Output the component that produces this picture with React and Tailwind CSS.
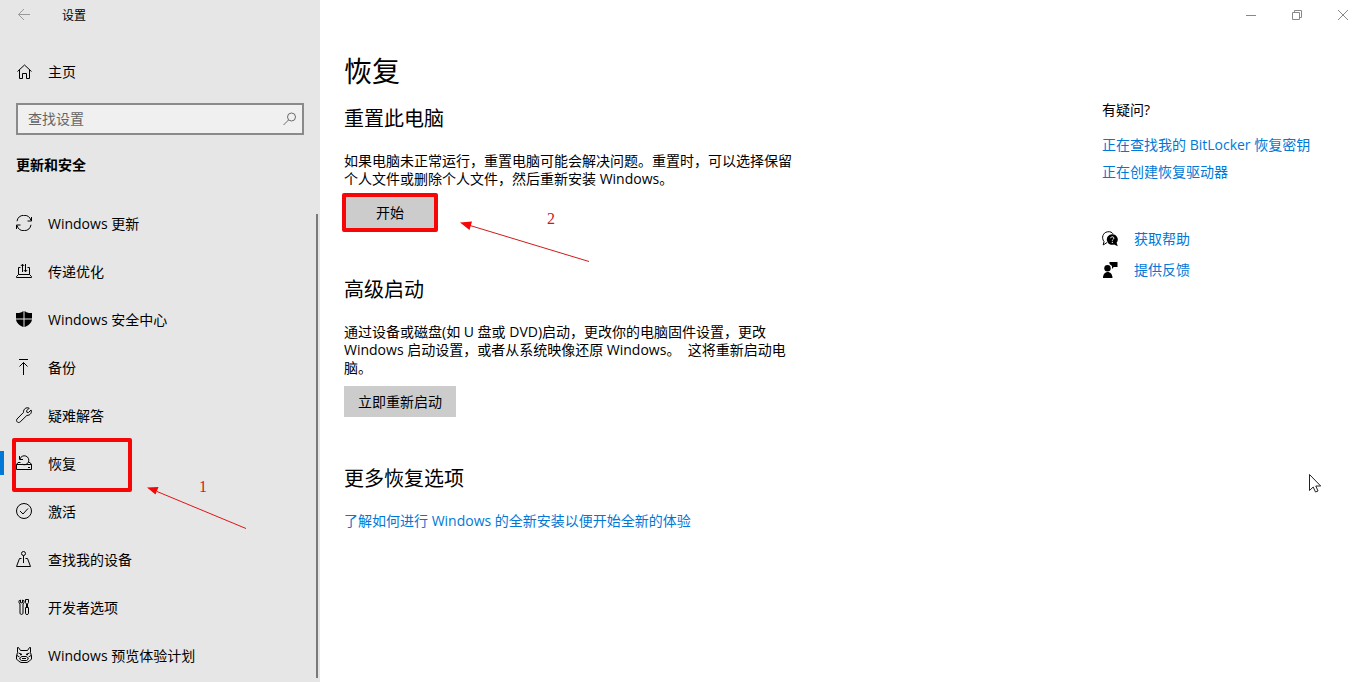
import React from "react";

const Icon = ({ children, size = "size-4", viewBox = "0 0 16 16", className = "" }) => (
  <svg
    className={`${size} shrink-0 ${className}`}
    viewBox={viewBox}
    fill="none"
    stroke="currentColor"
    strokeWidth="1"
    aria-hidden="true"
  >
    {children}
  </svg>
);

const SyncIcon = () => (
  <Icon className="mb-0.5">
    <path d="M1 6.2A7.2 7.2 0 0 1 15 5.5M15 9.8A7.2 7.2 0 0 1 1 10.5" />
    <path d="M15.5 2v4h-4M.5 14v-4h4" />
  </Icon>
);

const DeliveryIcon = () => (
  <Icon className="mb-0.5">
    <path d="M4.5 4.5h-2v7M11.5 4.5h2v7M2.5 11.5h11l2 2v1H.5v-1z" />
    <path d="M6.5 9V1.2M4.8 3l1.7-1.8L8.2 3M9.5 1v7.8M7.8 7l1.7 1.8L11.2 7" />
  </Icon>
);

const ShieldIcon = () => (
  <Icon className="mb-0.5">
    <path
      d="M7.500 0 5.500 1.300 3 2H0v5.500h7.500zM8.500 0l2 1.300L13 2h3v5.500H8.500zM0 8.500h7.500V16C3.500 14.500.5 12 0 8.500zM8.500 8.500H16C15.500 12 12.500 14.500 8.500 16z"
      fill="currentColor"
      stroke="none"
    />
  </Icon>
);

const BackupIcon = () => (
  <Icon className="mb-0.5">
    <path d="M3 .5h9M7.500 3.500V16M3.500 7.500l4-4 4 4" />
  </Icon>
);

const WrenchIcon = () => (
  <Icon className="mb-0.5">
    <path d="M13.200 1.200 10.600 3.800l.3 1.500 1.500.3 2.700-2.600c1 2.500-.7 5.500-4.200 5.400L4.200 14.900c-2 1.800-4.800-.7-3.200-2.900l6.500-6.600C7.200 2 10.300-.1 13.200 1.200z" />
  </Icon>
);

const RecoveryIcon = () => (
  <Icon className="mb-0.5">
    <path d="M.5 9.500h15v5H.5zM.5 9.500l1.500-2h2.500M15.500 9.500l-1.500-2h-1.500M12 12.500h2" />
    <path d="M4 4a4.500 4.500 0 1 1 2.300 5.300M3.500 1v3.500H7" />
  </Icon>
);

const CheckIcon = () => (
  <Icon className="mb-0.5">
    <circle cx="8" cy="8" r="7.500" />
    <path d="M4 8l3 3 5-5.500" />
  </Icon>
);

const LocateIcon = () => (
  <Icon className="mb-0.5">
    <circle cx="7.500" cy="2.500" r="2" />
    <path d="M7.500 4.500V12M5.500 7.500h-2l-3 8h14l-3-8h-2" />
  </Icon>
);

const ToolsIcon = () => (
  <Icon className="mb-0.5">
    <path d="M4.500.800v3h2v-3M3.600 1C2.500 2.500 2.800 4 4 5v9.200c0 1.600 3 1.600 3 0V5c1.200-1 1.500-2.500.4-4M9.500.500h3v3l-1 1.500v4M10.500 5v4M9.300 8.500h3.400M9.500 9v5.500c0 1.300 3 1.300 3 0V9M9.500.5v3l1 1.500" />
  </Icon>
);

const InsiderIcon = () => (
  <Icon className="mb-0.5">
    <path d="M4.500 3.500h7L13.500.5h1v5l1 3.500v3l-2 2-2.500 1.500H5L2.500 14l-2-2V9l1-3.500v-5h1z" />
    <path d="M1 8.500 3.500 10M15 8.500 12.500 10M2.500 6l3.500 1.500M13.500 6 10 7.500" />
    <path d="M5.500 9.500 3.500 12l2 1.500h5l2-1.500-2-2.500zM6 11.500h4" />
    <path d="M4 7.500h1.500M10.500 7.500H12" strokeWidth="1.500" />
  </Icon>
);

const HelpIcon = () => (
  <Icon>
    <path d="M5 11.500 1.200 14l.8-3.500C-.8 7 .8 1.500 5.500.8 8.500.3 10 1.500 11 2.800" />
    <path
      d="M10.300 3.200a5.300 5.300 0 1 0 1.800 10.200l3.700 1.900-1.200-3.500a5.300 5.300 0 0 0-4.300-8.600z"
      fill="currentColor"
      stroke="none"
    />
    <path d="M8.600 7.200c.2-2 3.400-1.800 3.300 0-.1 1.200-1.600 1.200-1.600 2.500M10.300 10.800V12" stroke="white" />
  </Icon>
);

const FeedbackIcon = () => (
  <Icon>
    <g fill="currentColor" stroke="none">
      <circle cx="5.500" cy="6.200" r="3.200" />
      <path d="M1 16c0-8 9.500-8 9.500 0zM7.500 0h8v5h-3.800L10 7V4L7.500 2z" />
    </g>
  </Icon>
);

const navItems = [
  { label: "Windows 更新", icon: SyncIcon },
  { label: "传递优化", icon: DeliveryIcon },
  { label: "Windows 安全中心", icon: ShieldIcon },
  { label: "备份", icon: BackupIcon },
  { label: "疑难解答", icon: WrenchIcon },
  { label: "恢复", icon: RecoveryIcon, active: true },
  { label: "激活", icon: CheckIcon },
  { label: "查找我的设备", icon: LocateIcon },
  { label: "开发者选项", icon: ToolsIcon },
  { label: "Windows 预览体验计划", icon: InsiderIcon },
];

// Step 1 marker: frame, arrow and number on top of the active nav item
const StepOne = () => (
  <div className="pointer-events-none absolute inset-0 z-10 text-[#e01414]">
    <div className="absolute -top-0.5 left-3 h-[54px] w-[120px] rounded-xs border-4 border-[#f60606]" />
    <svg className="absolute left-[147px] top-[46px] h-[44px] w-[100px]" viewBox="0 0 100 44" aria-hidden="true">
      <path d="M10 5.500 99 42.500" stroke="#e01414" fill="none" />
      <path d="M0 1.500 11.500 1 8.500 8.500z" fill="#f60606" />
    </svg>
    <span className="absolute left-[199px] top-[37px] font-['Liberation_Serif',serif] text-base leading-5">1</span>
  </div>
);

const StepTwo = () => (
  <div className="pointer-events-none absolute inset-0 z-10 text-[#c41c1c]">
    <div className="absolute -left-0.5 -top-1 h-[39px] w-24 rounded-xs border-4 border-[#f60606]" />
    <svg className="absolute left-[116px] top-[24px] h-[42px] w-[130px]" viewBox="0 0 130 42" aria-hidden="true">
      <path d="M10 4.500 129 40.500" stroke="#d01a1a" fill="none" />
      <path d="M0 1.500 12 .5 9.500 9z" fill="#f60606" />
    </svg>
    <span className="absolute left-[203px] top-3 font-['Liberation_Serif',serif] text-base leading-5">2</span>
  </div>
);

const NavItem = ({ item }) => {
  const ItemIcon = item.icon;
  return (
    <li className="relative">
      <a
        href="#"
        aria-current={item.active ? "page" : undefined}
        className="relative flex h-12 items-center gap-4 pl-4"
      >
        {item.active && <span className="absolute left-0 top-[11px] h-6 w-1 bg-[#0078d7]" />}
        <ItemIcon />
        <span>{item.label}</span>
      </a>
      {item.active && <StepOne />}
    </li>
  );
};

const Sidebar = () => (
  <aside className="flex w-80 shrink-0 flex-col bg-[#e6e6e6]">
    <div className="flex h-8 items-center gap-[30px] pl-4">
      <button type="button" aria-label="返回" className="text-[#999999]">
        <Icon>
          <path d="M2.500 6.500H14M8 1 2.500 6.500 8 12" />
        </Icon>
      </button>
      <span className="text-xs">设置</span>
    </div>

    <a href="#" className="mt-4 flex h-12 items-center gap-4 pl-4">
      <Icon>
        <path d="M1.500 7.500 8.500 1l7 6.500M3.500 6v8.500h3v-5h4v5h3V6" />
      </Icon>
      <span>主页</span>
    </a>

    <div className="relative mx-4 mt-[7px]">
      <input
        type="text"
        aria-label="查找设置"
        placeholder="查找设置"
        className="block h-8 w-full border-2 border-[#8a8a8a] bg-[#f0f0f0] pb-0.5 pl-2.5 pr-8 outline-none placeholder:text-[#666666]"
      />
      <svg
        className="absolute right-1.5 top-2 size-4 text-[#6b6b6b]"
        viewBox="0 0 16 16"
        fill="none"
        stroke="currentColor"
        aria-hidden="true"
      >
        <circle cx="9.500" cy="6" r="4" />
        <path d="M6.500 9 1.500 14" />
      </svg>
    </div>

    <h2 className="ml-4 mt-5 text-sm leading-5 font-bold">更新和安全</h2>

    <div className="mt-[25px] flex flex-1">
      <ul className="flex-1">
        {navItems.map((item) => (
          <NavItem key={item.label} item={item} />
        ))}
      </ul>
      <div className="mb-1 mr-0.5 mt-3.5 w-0.5 bg-[#7a7a7a]" />
    </div>
  </aside>
);

const WindowControls = () => (
  <div className="flex h-[30px] justify-end text-[#888888]">
    <button type="button" aria-label="最小化" className="flex w-[46px] items-center justify-center">
      <Icon size="size-3" viewBox="0 0 12 12">
        <path d="M2 6.500h10" />
      </Icon>
    </button>
    <button type="button" aria-label="还原" className="flex w-[46px] items-center justify-center">
      <Icon size="size-3" viewBox="0 0 12 12">
        <path d="M2.500 3.500h7v7h-7zM4.500 3.500v-2h7v7h-2" />
      </Icon>
    </button>
    <button type="button" aria-label="关闭" className="flex w-[46px] items-center justify-center">
      <Icon size="size-3" viewBox="0 0 12 12">
        <path d="M2 1l10 10M12 1 2 11" />
      </Icon>
    </button>
  </div>
);

const SectionTitle = ({ children, className = "" }) => (
  <h2 className={`text-xl leading-7 ${className}`}>{children}</h2>
);

const Link = ({ children }) => (
  <a href="#" className="text-[#0078d7]">
    {children}
  </a>
);

const Content = () => (
  <section className="w-[450px]">
    <h1 className="text-[28px] leading-10">恢复</h1>

    <SectionTitle className="mt-3.5">重置此电脑</SectionTitle>
    <p className="mt-[19px] leading-[18px]">
      如果电脑未正常运行，重置电脑可能会解决问题。重置时，可以选择保留个人文件或删除个人文件，然后重新安装 Windows。
    </p>
    <div className="relative mt-[9px] w-fit">
      <button type="button" className="block h-[31px] w-[92px] bg-[#cccccc]">
        开始
      </button>
      <StepTwo />
    </div>

    <SectionTitle className="mt-12">高级启动</SectionTitle>
    <p className="mt-[19px] leading-[18px]">
      通过设备或磁盘(如 U 盘或 DVD)启动，更改你的电脑固件设置，更改 Windows 启动设置，或者从系统映像还原 Windows。&nbsp; 这将重新启动电脑。
    </p>
    <button type="button" className="mt-[9px] block h-[31px] bg-[#cccccc] px-3.5">
      立即重新启动
    </button>

    <SectionTitle className="mt-12">更多恢复选项</SectionTitle>
    <p className="mt-[19px] leading-[18px]">
      <Link>了解如何进行 Windows 的全新安装以便开始全新的体验</Link>
    </p>
  </section>
);

const HelpPanel = () => (
  <aside className="w-[263px] shrink-0 pt-[49px]">
    <h3 className="leading-5">有疑问?</h3>
    <ul className="mt-[15px] space-y-[7px] leading-5">
      <li>
        <Link>正在查找我的 BitLocker 恢复密钥</Link>
      </li>
      <li>
        <Link>正在创建恢复驱动器</Link>
      </li>
    </ul>
    <ul className="mt-[47px] space-y-[11px] leading-5">
      <li className="flex items-center gap-4">
        <HelpIcon />
        <Link>获取帮助</Link>
      </li>
      <li className="flex items-center gap-4">
        <FeedbackIcon />
        <Link>提供反馈</Link>
      </li>
    </ul>
  </aside>
);

const Cursor = () => (
  <svg
    className="pointer-events-none absolute right-11 top-[473px] h-5 w-3"
    viewBox="0 0 12 20"
    fill="white"
    stroke="#222222"
    aria-hidden="true"
  >
    <path d="M.5 1.500v16l3.700-3.500 2.300 5 2.500-1-2.200-5h4.900z" />
  </svg>
);

export default function App() {
  return (
    <div className="relative flex min-h-screen bg-white font-['Open_Sans','Noto_Sans_CJK_SC',sans-serif] text-sm text-black">
      <Sidebar />
      <main className="flex-1">
        <WindowControls />
        <div className="flex justify-between pl-6 pt-[21px]">
          <Content />
          <HelpPanel />
        </div>
      </main>
      <Cursor />
    </div>
  );
}
